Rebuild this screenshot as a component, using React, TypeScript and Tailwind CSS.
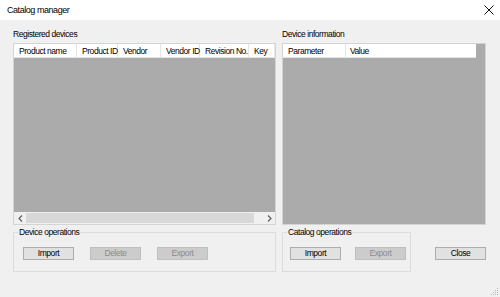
const font = "font-['Liberation_Sans',Arial,sans-serif] text-[8.5px] tracking-[-0.45px] leading-[10px]";

function Btn({ label, disabled }: { label: string; disabled?: boolean }) {
  return (
    <button
      className={
        disabled
          ? "w-[51px] h-[13px] border border-[#bfbfbf] bg-[#cccccc] text-[#8d8d8d] leading-[11px]"
          : "w-[51px] h-[13px] border border-[#adadad] bg-[#e1e1e1] text-black leading-[11px]"
      }
    >
      {label}
    </button>
  );
}

function HeaderCell({ label, w }: { label: string; w: number | string }) {
  return (
    <div
      className="h-full flex items-center pl-[5px] border-r border-[#e5e5e5] shrink-0 whitespace-nowrap"
      style={{ width: w }}
    >
      {label}
    </div>
  );
}

export default function App() {
  return (
    <div className={`w-[500px] h-[297px] bg-[#f0f0f0] text-black flex flex-col ${font}`}>
      {/* title bar */}
      <div className="h-[20px] bg-white flex items-center justify-between pl-[7px] pr-[6px] shrink-0">
        <span className="text-[9px] tracking-[-0.45px]">Catalog manager</span>
        <svg width="10" height="10" viewBox="0 0 10 10">
          <path d="M0.5 0.5 L9.5 9.5 M9.5 0.5 L0.5 9.5" stroke="#111" strokeWidth="1" />
        </svg>
      </div>

      <div className="flex-1 pl-[13px] pr-[14px] pt-[9px] flex flex-col relative">
        <div className="flex gap-[6px]">
          {/* registered devices */}
          <div className="w-[263px] flex flex-col">
            <div className="h-[10px] mb-[4px]">Registered devices</div>
            <div className="h-[182px] border border-[#d4d4d4] flex flex-col bg-[#ababab]">
              <div className="h-[14px] bg-white flex border-b border-[#e5e5e5] overflow-hidden">
                <HeaderCell label="Product name" w={63} />
                <HeaderCell label="Product ID" w={41} />
                <HeaderCell label="Vendor" w={43} />
                <HeaderCell label="Vendor ID" w={39} />
                <HeaderCell label="Revision No." w={49} />
                <HeaderCell label="Key" w={26} />
              </div>
              <div className="flex-1" />
              <div className="h-[12px] bg-[#f0f0f0] flex items-center">
                <div className="w-[12px] h-full flex items-center justify-center">
                  <svg width="5" height="7" viewBox="0 0 5 7">
                    <path d="M4 0.5 L1 3.5 L4 6.5" fill="none" stroke="#606060" strokeWidth="1.2" />
                  </svg>
                </div>
                <div className="flex-1 h-full flex items-center">
                  <div className="w-[228px] h-[10px] bg-[#d8d8d8]" />
                </div>
                <div className="w-[12px] h-full flex items-center justify-center">
                  <svg width="5" height="7" viewBox="0 0 5 7">
                    <path d="M1 0.5 L4 3.5 L1 6.5" fill="none" stroke="#606060" strokeWidth="1.2" />
                  </svg>
                </div>
              </div>
            </div>
          </div>

          {/* device information */}
          <div className="flex-1 flex flex-col">
            <div className="h-[10px] mb-[4px]">Device information</div>
            <div className="h-[182px] border border-[#d4d4d4] bg-[#ababab] flex flex-col">
              <div className="h-[14px] flex">
                <div className="flex bg-white border-b border-[#e5e5e5] w-[193px]">
                  <HeaderCell label="Parameter" w={63} />
                  <div className="flex-1 flex items-center pl-[4px]">Value</div>
                </div>
              </div>
            </div>
          </div>
        </div>

        {/* operations row */}
        <div className="flex items-start mt-[2px]">
          <fieldset className="w-[263px] h-[45px] border border-[#dcdcdc]">
            <legend className="ml-[4px] px-[1px] leading-[10px]">Device operations</legend>
            <div className="flex gap-[16px] mt-[10px] pl-[9px]">
              <Btn label="Import" />
              <Btn label="Delete" disabled />
              <Btn label="Export" disabled />
            </div>
          </fieldset>
          <fieldset className="ml-[6px] w-[129px] h-[45px] border border-[#dcdcdc]">
            <legend className="ml-[4px] px-[1px] leading-[10px]">Catalog operations</legend>
            <div className="flex gap-[14px] mt-[10px] pl-[7px]">
              <Btn label="Import" />
              <Btn label="Export" disabled />
            </div>
          </fieldset>
          <div className="ml-auto mt-[20px]">
            <Btn label="Close" />
          </div>
        </div>

        {/* resize grip */}
        <svg className="absolute right-[1px] bottom-[1px]" width="10" height="10" viewBox="0 0 10 10">
          <g fill="#b8b8b8">
            <rect x="8" y="2" width="1" height="1" />
            <rect x="6" y="4" width="1" height="1" />
            <rect x="8" y="4" width="1" height="1" />
            <rect x="4" y="6" width="1" height="1" />
            <rect x="6" y="6" width="1" height="1" />
            <rect x="8" y="6" width="1" height="1" />
            <rect x="2" y="8" width="1" height="1" />
            <rect x="4" y="8" width="1" height="1" />
            <rect x="6" y="8" width="1" height="1" />
            <rect x="8" y="8" width="1" height="1" />
          </g>
        </svg>
      </div>
    </div>
  );
}
